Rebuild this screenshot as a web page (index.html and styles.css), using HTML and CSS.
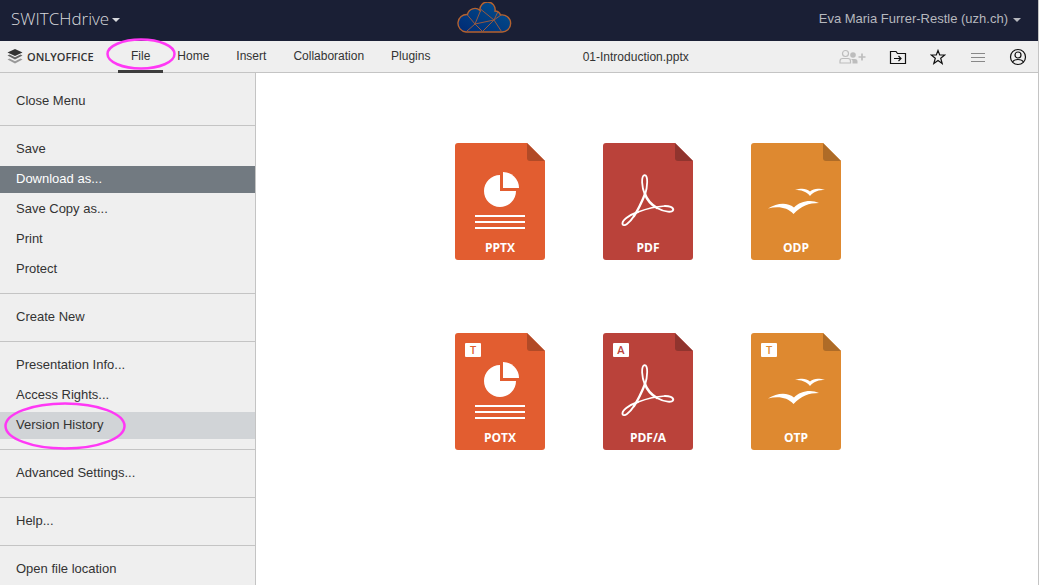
FILE: index.html
```
<!DOCTYPE html>
<html lang="en">
<head>
<meta charset="utf-8">
<meta name="viewport" content="width=device-width, initial-scale=1">
<title>01-Introduction.pptx</title>
<link rel="stylesheet" href="styles.css">
</head>
<body>
<svg class="sprite" aria-hidden="true">
  <symbol id="sheet" viewBox="0 0 90 117">
    <path d="M3 0H72L90 18V114a3 3 0 0 1-3 3H3a3 3 0 0 1-3-3V3a3 3 0 0 1 3-3z" fill="currentColor"/>
    <path class="fold" d="M72 0L90 18H75a3 3 0 0 1-3-3z"/>
  </symbol>
  <symbol id="slides" viewBox="0 0 90 117">
    <path d="M45 32V48H61A16 16 0 1 1 45 32z" fill="#fff"/>
    <path d="M48 29A16 16 0 0 1 64 45H48z" fill="#fff"/>
    <path d="M20 72H70v2H20zM20 78H70v2H20zM20 84H70v2H20z" fill="#fff"/>
  </symbol>
  <symbol id="acrobat" viewBox="0 0 90 117">
    <g fill="none" stroke="#fff" stroke-linecap="round" stroke-linejoin="round">
      <path d="M42 52C38.500 44 38 33 41.500 32.200C45.500 32 44.500 44 42 52" stroke-width="1.800"/>
      <path d="M42 51C38 61 35 67 31 73" stroke-width="2.300"/>
      <path d="M31 73C26 81 21 83.500 19.700 81.500C18 78 26 72 35 69" stroke-width="1.900"/>
      <path d="M35 69C43 66 53 63.500 62 63" stroke-width="1.500"/>
      <path d="M42 51C44 57 49 62 54 65" stroke-width="2.400"/>
      <path d="M54 65C62 69.500 70 69.500 70.200 67C70.500 64 66 63 62 63" stroke-width="2"/>
    </g>
  </symbol>
  <symbol id="gulls" viewBox="0 0 90 117">
    <path d="M17 65.500C26 60 36 59 43 64.500C49 58 60 56 68 60C58 60 50 63 42.500 71C36 64 27 63 17 65.500z" fill="#fff"/>
    <path d="M44 47C50 45 55 45 59 48.500C63 45 68 45 74 47C68 47 63 48 59 53C55 48 50 47 44 47z" fill="#fff"/>
  </symbol>
</svg>

<header class="topbar">
  <button class="brand" type="button">SWITCHdrive <span class="caret"></span></button>
  <a class="cloud" href="#" aria-label="SWITCHdrive home">
    <svg width="55" height="32" viewBox="0 0 55 32" fill="none">
      <defs><linearGradient id="sky" x1="0" y1="1" x2="1" y2="0"><stop stop-color="#002a75"/><stop offset="1" stop-color="#02518d"/></linearGradient></defs>
      <path d="M9 30A8.500 8.500 0 0 1 10.500 12.500A7.500 7.500 0 0 1 23 8.500A7.600 7.600 0 1 1 38 9A6 6 0 0 1 43.500 13A8.600 8.600 0 1 1 44 30z" fill="url(#sky)" stroke="#b5622f" stroke-width="1.400"/>
      <path d="M9.500 29.500L18 22L25.500 29.500L37 18L44.500 29.500M10 12.500L18 22L24 7.500L37 18L41 9.500M44 13L37 18L18 22" stroke="#98593f"/>
    </svg>
  </a>
  <button class="account" type="button">Eva Maria Furrer-Restle (uzh.ch) <span class="caret"></span></button>
</header>

<div class="toolbar">
  <div class="product">
    <svg width="16" height="15" viewBox="0 0 16 15">
      <path d="M8 0L15.500 3.500L8 7L.5 3.500z" fill="#333"/>
      <path d="M.5 6.500L2.500 5.600L8 8.200L13.500 5.600L15.500 6.500L8 10.500z" fill="#666"/>
      <path d="M.5 10.500L2.500 9.600L8 12.200L13.500 9.600L15.500 10.500L8 14.500z" fill="#999"/>
    </svg>
    ONLYOFFICE
  </div>
  <nav class="tabs" aria-label="Editor">
    <button class="tab active" type="button">File
      <svg class="mark mark-file" viewBox="0 0 70 32" aria-hidden="true"><ellipse cx="35" cy="16" rx="33.500" ry="14.500"/></svg>
    </button>
    <button class="tab" type="button">Home</button>
    <button class="tab" type="button">Insert</button>
    <button class="tab" type="button">Collaboration</button>
    <button class="tab" type="button">Plugins</button>
  </nav>
  <h1 class="doc-title">01-Introduction.pptx</h1>
  <div class="tools">
    <button class="tool wide" type="button" aria-label="Share" disabled>
      <svg width="28" height="16" viewBox="0 0 28 16" fill="none" stroke="#bdbdbd">
        <circle cx="6.500" cy="4.500" r="3" stroke-width="1.200"/><path d="M1 14V12Q1 9.500 3.500 9.500H9Q11.500 9.500 11.500 12V14z" stroke-width="1.200"/>
        <circle cx="14" cy="6" r="2.800" fill="#bdbdbd" stroke="none"/><path d="M13.500 14.500V11.500L12 10H16Q18.500 10 18.500 12.500V14.500z" fill="#bdbdbd" stroke="none"/>
        <path d="M19.500 8H26.500M23 4.500V11.500" stroke-width="1.700"/>
      </svg>
    </button>
    <button class="tool" type="button" aria-label="Open file location">
      <svg width="18" height="16" viewBox="0 0 18 16" fill="none" stroke="#111" stroke-width="1.200">
        <path d="M1.500 2.500H7L8.500 4.500H16.500V14.500H1.500z"/><path d="M5 9.500H12M9.500 7L12 9.500L9.500 12"/>
      </svg>
    </button>
    <button class="tool" type="button" aria-label="Mark as favorite">
      <svg width="16" height="16" viewBox="0 0 16 16" fill="none" stroke="#111" stroke-width="1.200">
        <path d="M8 1.500L9.700 6H14.700L10.700 9.200L12.200 14.500L8 11.500L3.800 14.500L5.300 9.200L1.300 6H6.300z"/>
      </svg>
    </button>
    <button class="tool" type="button" aria-label="View settings">
      <svg width="14" height="16" viewBox="0 0 14 16" stroke="#888"><path d="M0 4.500H14M0 8.500H14M0 12.500H14"/></svg>
    </button>
    <button class="tool" type="button" aria-label="User">
      <svg width="18" height="18" viewBox="0 0 18 18" fill="none" stroke="#111" stroke-width="1.200">
        <circle cx="9" cy="9" r="7.500"/><circle cx="9" cy="7" r="3"/><path d="M3.500 14Q5 11.500 9 11.500T14.500 14"/>
      </svg>
    </button>
  </div>
</div>

<div class="workspace">
  <nav class="menu" aria-label="File">
    <div class="group"><button class="item" type="button">Close Menu</button></div>
    <div class="group">
      <button class="item" type="button">Save</button>
      <button class="item selected" type="button">Download as...</button>
      <button class="item" type="button">Save Copy as...</button>
      <button class="item" type="button">Print</button>
      <button class="item" type="button">Protect</button>
    </div>
    <div class="group"><button class="item" type="button">Create New</button></div>
    <div class="group">
      <button class="item" type="button">Presentation Info...</button>
      <button class="item" type="button">Access Rights...</button>
      <button class="item hovered" type="button">Version History
        <svg class="mark mark-history" viewBox="0 0 122 48" aria-hidden="true"><ellipse cx="61" cy="24" rx="59.500" ry="22.500"/></svg>
      </button>
    </div>
    <div class="group"><button class="item" type="button">Advanced Settings...</button></div>
    <div class="group"><button class="item" type="button">Help...</button></div>
    <div class="group"><button class="item" type="button">Open file location</button></div>
  </nav>
  <main class="formats">
    <button class="format orange" type="button">
      <svg class="art" viewBox="0 0 90 117" aria-hidden="true"><use href="#sheet"/><use href="#slides"/></svg>
      <span class="ext">PPTX</span>
    </button>
    <button class="format red" type="button">
      <svg class="art" viewBox="0 0 90 117" aria-hidden="true"><use href="#sheet"/><use href="#acrobat"/></svg>
      <span class="ext">PDF</span>
    </button>
    <button class="format amber" type="button">
      <svg class="art" viewBox="0 0 90 117" aria-hidden="true"><use href="#sheet"/><use href="#gulls"/></svg>
      <span class="ext">ODP</span>
    </button>
    <button class="format orange" type="button">
      <svg class="art" viewBox="0 0 90 117" aria-hidden="true"><use href="#sheet"/><use href="#slides"/></svg>
      <span class="badge">T</span><span class="ext">POTX</span>
    </button>
    <button class="format red" type="button">
      <svg class="art" viewBox="0 0 90 117" aria-hidden="true"><use href="#sheet"/><use href="#acrobat"/></svg>
      <span class="badge">A</span><span class="ext">PDF/A</span>
    </button>
    <button class="format amber" type="button">
      <svg class="art" viewBox="0 0 90 117" aria-hidden="true"><use href="#sheet"/><use href="#gulls"/></svg>
      <span class="badge">T</span><span class="ext">OTP</span>
    </button>
  </main>
</div>
</body>
</html>
```
FILE: styles.css
```
* { box-sizing: border-box; }

body {
  margin: 0;
  height: 100vh;
  display: flex;
  flex-direction: column;
  overflow: hidden;
  border-right: 1px solid #c4c4c4;
  background: #fff;
  color: #333;
  font-family: "Liberation Sans", Arial, sans-serif;
  font-size: 13px;
}

button {
  margin: 0;
  padding: 0;
  border: 0;
  background: none;
  color: inherit;
  font: inherit;
}

svg { display: block; flex: none; }
.sprite { position: absolute; width: 0; height: 0; }

.topbar {
  flex: none;
  height: 41px;
  display: grid;
  grid-template-columns: 44% auto 1fr;
  align-items: center;
  padding-bottom: 4px;
  background: #1a1f35;
}
.cloud { align-self: start; padding-top: 2px; }

.brand, .account { display: flex; align-items: center; }
.brand {
  justify-self: start;
  padding-left: 11px;
  gap: 3px;
  color: #d8d9dd;
  font: 300 17px "Open Sans", sans-serif;
}
.account {
  justify-self: end;
  padding-right: 17px;
  gap: 5px;
  color: #b6b8be;
}
.caret {
  margin-top: 2px;
  border: 4px solid transparent;
  border-top-color: currentColor;
  border-bottom: 0;
}

.toolbar {
  flex: none;
  height: 32px;
  display: flex;
  background: #efefef;
  border-bottom: 1px solid #c4c4c4;
}
.product {
  display: flex;
  align-items: center;
  gap: 4px;
  width: 118px;
  padding-left: 7px;
  color: #333;
  font: 600 11px "Open Sans", sans-serif;
}
.tabs { display: flex; gap: 1px; height: 32px; }
.tab {
  position: relative;
  padding: 0 13px 2px;
  font-size: 12px;
}
.tab.active { box-shadow: inset 0 -3px #3d3d3d; }
.doc-title {
  flex: 1;
  margin: 0;
  font-size: 12px;
  font-weight: 400;
  line-height: 32px;
  text-align: center;
}
.tools { display: flex; }
.tool {
  width: 40px;
  display: flex;
  align-items: center;
  justify-content: center;
}
.tool.wide { width: 50px; }

.workspace { flex: 1; min-height: 0; display: flex; }
.menu {
  flex: none;
  width: 256px;
  padding-top: 5px;
  background: #efefef;
  border-right: 1px solid #c4c4c4;
}
.group {
  display: flex;
  flex-direction: column;
  gap: 3px;
  padding: 10px 0;
}
.group + .group { border-top: 1px solid #c4c4c4; }
.item {
  position: relative;
  height: 27px;
  padding: 0 16px 2px;
  text-align: left;
}
.item.selected { background: #727a81; color: #fff; }
.item.hovered { background: #d1d4d7; }

.mark {
  position: absolute;
  z-index: 1;
  fill: none;
  stroke: #ff38f5;
  stroke-width: 2.5px;
  pointer-events: none;
}
.mark-file { width: 70px; left: -12px; top: -3px; }
.mark-history { width: 122px; left: 4px; top: -10px; }

.formats {
  flex: 1;
  display: grid;
  grid-template-columns: repeat(3, 90px);
  grid-auto-rows: 117px;
  gap: 73px 58px;
  justify-content: center;
  align-content: start;
  padding: 70px 0 0 2px;
}
.format {
  position: relative;
  display: flex;
  align-items: flex-end;
  justify-content: center;
  padding-bottom: 4px;
  font: 700 12px/17px "Open Sans", sans-serif;
}
.art { position: absolute; inset: 0; width: 100%; }
.ext { position: relative; color: #fff; }
.badge {
  position: absolute;
  left: 10px;
  top: 10px;
  width: 16px;
  border-radius: 1px;
  background: #fff;
  font: 600 11px/14px "Open Sans", sans-serif;
  text-align: center;
}
.orange { color: #e25d30; --fold: #b14a27; }
.red { color: #ba423a; --fold: #90342e; }
.amber { color: #de8930; --fold: #ae6b27; }
.fold { fill: var(--fold); }
```
